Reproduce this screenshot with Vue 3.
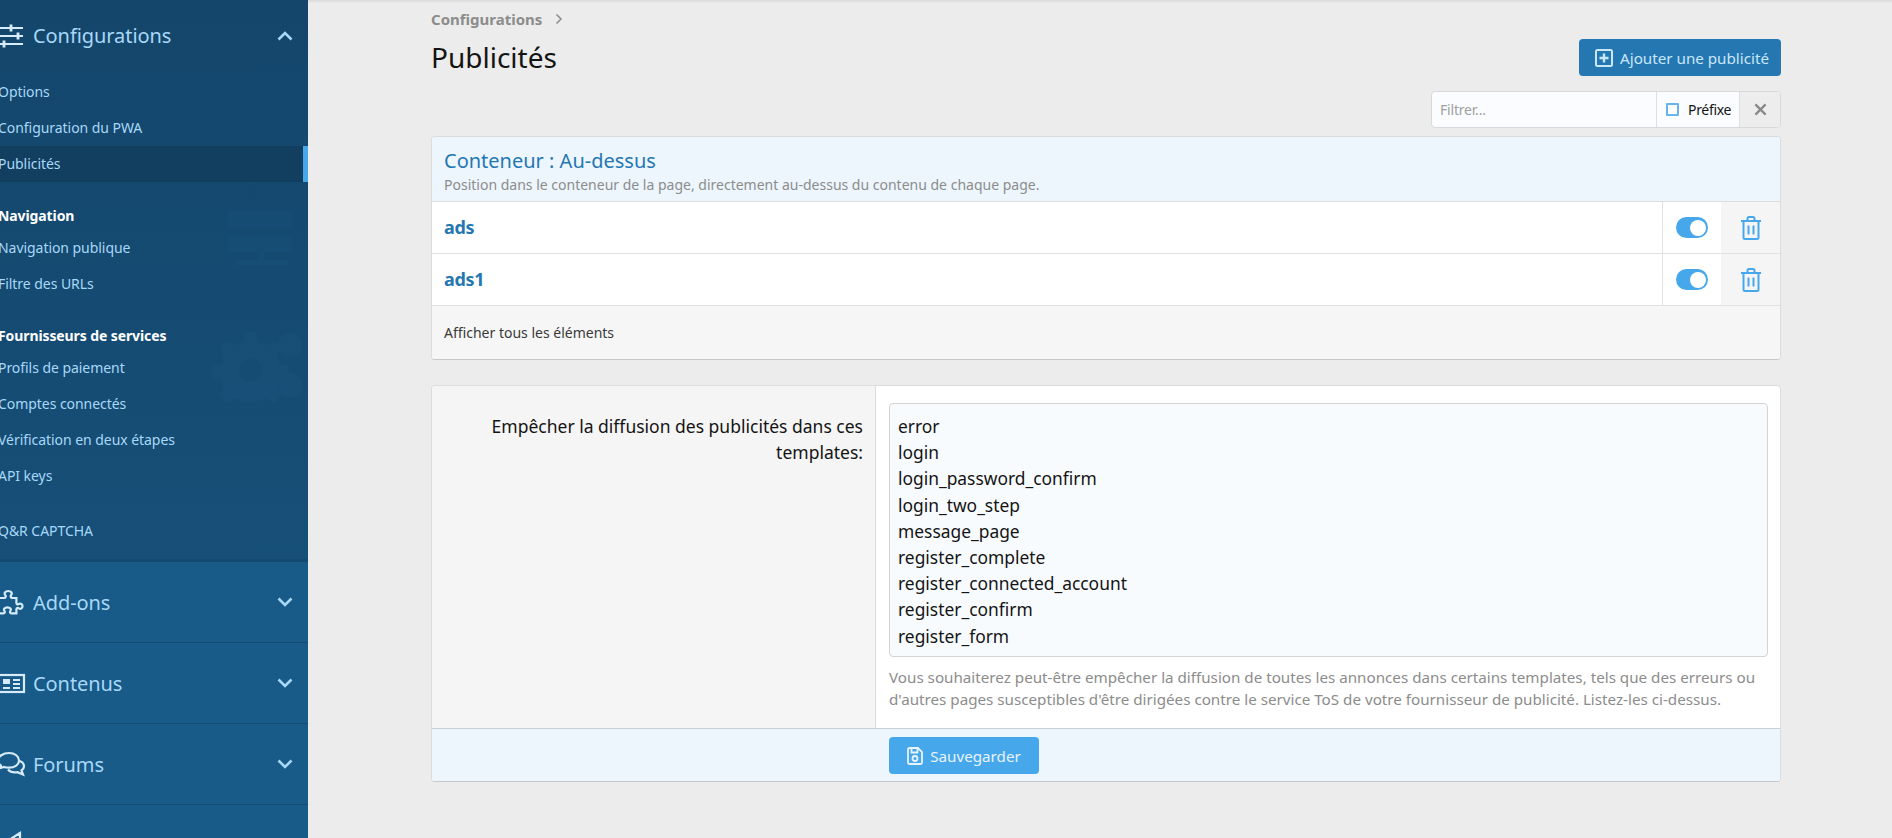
<script setup>
const groups = [
  { heading: '', items: ['Options', 'Configuration du PWA', 'Publicités'] },
  { heading: 'Navigation', items: ['Navigation publique', 'Filtre des URLs'] },
  { heading: 'Fournisseurs de services', items: ['Profils de paiement', 'Comptes connectés', 'Vérification en deux étapes', 'API keys'] },
  { heading: '', items: ['Q&R CAPTCHA'] }
]
const closedGroups = [
  { label: 'Add-ons', icon: 'puzzle' },
  { label: 'Contenus', icon: 'news' },
  { label: 'Forums', icon: 'chat' }
]
const rows = ['ads', 'ads1']
const templates = [
  'error', 'login', 'login_password_confirm', 'login_two_step', 'message_page',
  'register_complete', 'register_connected_account', 'register_confirm', 'register_form'
].join('\n')
</script>

<template>
  <div class="page">
    <aside class="sidebar">
      <div class="open-group">
        <div class="nav-head top">
          <svg class="nav-icon" viewBox="0 0 26 24" fill="none" stroke="currentColor" stroke-width="2.200">
            <path d="M-1 4h25M-1 12h25M-1 20h25" />
            <path d="M12 .5v7M19 8.500v7M5 16.500v7" stroke-width="2.800" />
          </svg>
          <span class="nav-label">Configurations</span>
          <svg class="chev" viewBox="0 0 16 10" fill="none" stroke="currentColor" stroke-width="2.600"><path d="M1.500 8.500L8 2l6.500 6.500" /></svg>
        </div>
        <section v-for="(g, i) in groups" :key="i" class="nav-section">
          <div v-if="g.heading" class="nav-heading">{{ g.heading }}</div>
          <div v-for="item in g.items" :key="item" class="nav-item" :class="{ active: item === 'Publicités' }">{{ item }}</div>
        </section>
        <svg class="wm wm-a" viewBox="0 0 80 64" fill="currentColor">
          <rect x="4" y="2" width="68" height="18" rx="3" />
          <rect x="4" y="28" width="68" height="18" rx="3" />
          <rect x="36" y="46" width="6" height="10" />
          <rect x="12" y="54" width="56" height="6" />
        </svg>
        <svg class="wm wm-b" viewBox="0 0 100 76" fill="currentColor">
          <path fill-rule="evenodd" d="M36 2h12l2 10 8 4 9-5 8 8-5 9 3 8 10 2v12l-10 2-3 8 5 9-8 8-9-5-8 3-2 10H36l-2-10-8-3-9 5-8-8 5-9-3-8-10-2V38l10-2 3-8-5-9 8-8 9 5 8-4zM42 30a12 12 0 1 0 .01 0z" />
          <circle cx="84" cy="16" r="13" />
          <circle cx="84" cy="58" r="13" />
        </svg>
      </div>
      <div v-for="c in closedGroups" :key="c.label" class="nav-head closed">
        <svg class="nav-icon" viewBox="0 0 26 26" fill="none" stroke="currentColor" stroke-width="2.200">
          <path v-if="c.icon === 'puzzle'" d="M-2 9h7c2 0 2-2 1.200-3-1.500-2 .3-4 3-4s4.500 2 3 4c-.8 1-.8 3 1.200 3h4v5c0 1.500 1.500 1.800 2.500 1 1.800-1.200 3.600.3 3.600 2.200s-1.800 3.400-3.600 2.200c-1-.8-2.500-.5-2.500 1v4h-5c-1.500 0-1.800-1.500-1-2.500 1.200-1.800-.3-3.600-3-3.600s-4.200 1.800-3 3.600c.8 1 .5 2.500-1 2.500h-5" />
          <template v-else-if="c.icon === 'news'">
            <rect x="-1" y="5" width="26" height="17" />
            <rect x="4" y="9" width="7" height="5" fill="currentColor" stroke="none" />
            <path d="M4 18h7M14 10h7M14 14h7M14 18h7" />
          </template>
          <template v-else>
            <path d="M10 2C4 2-1 5.500-1 9.500c0 2 1 3.700 2.800 5l-1.800 3 5-1.500c1.500.5 3 .7 5 .7 6 0 10-3.200 10-7.200S16 2 10 2z" />
            <path d="M21 10c2.500 1.200 4 3 4 5.200 0 1.700-1 3.200-2.500 4.300l1.500 4-5.500-2.300c-3 .5-7.200 0-9.500-2.700" />
          </template>
        </svg>
        <span class="nav-label">{{ c.label }}</span>
        <svg class="chev" viewBox="0 0 16 10" fill="none" stroke="currentColor" stroke-width="2.600"><path d="M1.500 1.500L8 8l6.500-6.500" /></svg>
      </div>
      <div class="nav-head closed tail">
        <svg class="nav-icon" viewBox="0 0 26 26" fill="none" stroke="currentColor" stroke-width="2.200">
          <path d="M21 1L10 8H0v9h10l11 7z" />
        </svg>
      </div>
    </aside>

    <main class="main">
      <div class="crumb">
        <span>Configurations</span>
        <svg viewBox="0 0 8 12" fill="none" stroke="currentColor" stroke-width="1.500"><path d="M1.500 1.500L6 6l-4.500 4.500" /></svg>
      </div>
      <div class="title-row">
        <h1>Publicités</h1>
        <button class="btn btn-add">
          <svg viewBox="0 0 18 18" fill="none" stroke="currentColor" stroke-width="2"><rect x="1" y="1" width="16" height="16" rx="1.500" /><path d="M9 4.500v9M4.500 9h9" stroke-width="2.400" /></svg>
          Ajouter une publicité
        </button>
      </div>
      <div class="filter-row">
        <div class="filter">
          <span class="f-input">Filtrer...</span>
          <span class="f-check"><i class="box"></i>Préfixe</span>
          <span class="f-clear">
            <svg viewBox="0 0 14 14" fill="none" stroke="currentColor" stroke-width="2.400"><path d="M1.500 1.500l11 11M12.500 1.500l-11 11" /></svg>
          </span>
        </div>
      </div>

      <section class="panel">
        <header class="panel-head">
          <div class="panel-title">Conteneur : Au-dessus</div>
          <div class="panel-sub">Position dans le conteneur de la page, directement au-dessus du contenu de chaque page.</div>
        </header>
        <div v-for="r in rows" :key="r" class="row">
          <div class="row-name">{{ r }}</div>
          <div class="row-toggle"><span class="toggle"><i></i></span></div>
          <div class="row-del">
            <svg viewBox="0 0 20 24" fill="none" stroke="currentColor" stroke-width="2">
              <path d="M0 5h20M6.500 5V2.500A1.500 1.500 0 0 1 8 1h4a1.500 1.500 0 0 1 1.500 1.500V5M2.500 5v16.500A1.500 1.500 0 0 0 4 23h12a1.500 1.500 0 0 0 1.500-1.500V5M7.500 9.500v9M12.500 9.500v9" />
            </svg>
          </div>
        </div>
        <footer class="panel-foot">Afficher tous les éléments</footer>
      </section>

      <section class="panel form">
        <div class="form-row">
          <label class="form-label">Empêcher la diffusion des publicités dans ces templates:</label>
          <div class="form-field">
            <textarea class="ta" readonly :value="templates"></textarea>
            <p class="help">Vous souhaiterez peut-être empêcher la diffusion de toutes les annonces dans certains templates, tels que des erreurs ou d'autres pages susceptibles d'être dirigées contre le service ToS de votre fournisseur de publicité. Listez-les ci-dessus.</p>
          </div>
        </div>
        <footer class="form-foot">
          <button class="btn btn-save">
            <svg viewBox="0 0 16 18" fill="none" stroke="currentColor" stroke-width="1.800"><path d="M1 2.500A1.500 1.500 0 0 1 2.500 1h8.500L15 5v10.500a1.500 1.500 0 0 1-1.500 1.500h-11A1.500 1.500 0 0 1 1 15.500z" /><path d="M4.500 1v4.500h6V1" /><circle cx="8" cy="11.500" r="2.500" /></svg>
            Sauvegarder
          </button>
        </footer>
      </section>
    </main>
  </div>
</template>

<style>
html, body { margin: 0; background: #ececec; }
</style>

<style scoped>
.page {
  display: flex;
  height: 838px;
  overflow: hidden;
  font-family: "Noto Sans", "Open Sans", sans-serif;
  color: #141414;
  background: #ececec;
}
.sidebar {
  width: 308px;
  flex: none;
  height: 838px;
  overflow: hidden;
  background: #185a88;
  color: #a8d8f8;
}
.open-group {
  position: relative;
  height: 562px;
  box-sizing: border-box;
  background: linear-gradient(#14466b, #164f78);
  border-bottom: 3px solid #144a70;
}
.nav-head {
  display: flex;
  align-items: center;
  height: 80px;
  border-bottom: 1px solid #154c74;
  padding-right: 15px;
}
.nav-head.top { height: 71px; border-bottom: 0; margin-bottom: 3px; }
.nav-icon { width: 26px; height: 26px; flex: none; margin-left: -1px; overflow: visible; color: #d6ecfb; }
.nav-label { margin-left: 8px; font-size: 20px; flex: 1; letter-spacing: -.07px; }
.chev { width: 16px; height: 10px; flex: none; }
.nav-section + .nav-section { margin-top: 20px; }
.nav-section:last-of-type { margin-top: 19px; }
.nav-heading {
  height: 28px;
  line-height: 28px;
  font-size: 14px;
  font-weight: 700;
  color: #fff;
  margin-left: -2px;
  letter-spacing: -.1px;
}
.nav-item {
  height: 36px;
  line-height: 36px;
  font-size: 14px;
  text-indent: -2px;
  letter-spacing: -.05px;
}
.nav-item.active {
  background: #123f60;
  box-shadow: inset -5px 0 0 #47a7eb;
}
.wm { position: absolute; color: #1a5680; opacity: .3; }
.wm-a { left: 224px; top: 208px; width: 76px; height: 62px; }
.wm-b { left: 210px; top: 330px; width: 96px; height: 72px; }

.main {
  width: 1350px;
  margin-left: 123px;
  flex: none;
  box-sizing: border-box;
  padding-top: 10px;
}
.page::before {
  content: "";
  position: absolute;
  left: 308px;
  right: 0;
  top: 0;
  height: 3px;
  background: linear-gradient(#d9d9d9, #ececec);
}
.crumb {
  display: flex;
  align-items: center;
  gap: 13px;
  height: 18px;
  font-size: 15px;
  font-weight: 700;
  color: #8c8c8c;
}
.crumb svg { width: 8px; height: 12px; }
.title-row {
  display: flex;
  justify-content: space-between;
  align-items: flex-start;
  margin-top: 11px;
  height: 52px;
}
h1 { margin: -1px 0 0; font-size: 28px; line-height: 38px; font-weight: 400; }
.btn {
  display: inline-flex;
  align-items: center;
  justify-content: center;
  height: 37px;
  border: 0;
  border-radius: 4px;
  font: inherit;
  font-size: 15.200px;
  color: #c9e7fb;
}
.btn-add { width: 202px; background: #2577b1; gap: 7px; padding-right: 2px; box-sizing: border-box; }
.btn-add svg { width: 18px; height: 18px; flex: none; }
.filter-row { display: flex; justify-content: flex-end; }
.filter {
  display: flex;
  width: 350px;
  height: 37px;
  box-sizing: border-box;
  border: 1px solid #d9d9d9;
  border-radius: 4px;
  background: #fafcff;
  overflow: hidden;
  font-size: 14px;
}
.f-input { width: 224px; line-height: 35px; padding-left: 8px; box-sizing: border-box; color: #a0a0a0; letter-spacing: -.2px; }
.f-check {
  width: 83px;
  display: flex;
  align-items: center;
  box-sizing: border-box;
  padding-left: 9px;
  gap: 9px;
  border-left: 1px solid #dfdfdf;
  letter-spacing: -.3px;
}
.box { width: 13px; height: 13px; box-sizing: border-box; border: 2px solid #6ab4ec; border-radius: 1px; background: #fff; }
.f-clear {
  flex: 1;
  display: flex;
  align-items: center;
  justify-content: center;
  background: #ededed;
  border-left: 1px solid #dfdfdf;
  color: #888;
}
.f-clear svg { width: 13px; height: 13px; }
.panel {
  margin-top: 8px;
  box-sizing: border-box;
  border: 1px solid #dcdcdc;
  border-bottom-color: #c8c8c8;
  border-radius: 4px;
  overflow: hidden;
  background: #fff;
}
.panel-head {
  height: 64px;
  border-bottom: 1px solid #dcdcdc;
  background: #edf6fd;
  padding-left: 12px;
}
.panel-title { padding-top: 10px; font-size: 20px; line-height: 27px; color: #2577b1; }
.panel-sub { margin-top: 2px; font-size: 14px; line-height: 18px; color: #8c8c8c; }
.row {
  display: flex;
  height: 51px;
  border-bottom: 1px solid #e2e2e2;
}
.row-name { flex: 1; padding-left: 12px; line-height: 51px; font-size: 18px; font-weight: 700; color: #2577b1; letter-spacing: -.3px; }
.row-toggle { width: 59px; display: flex; align-items: center; justify-content: center; border-left: 1px solid #e2e2e2; box-sizing: border-box; }
.toggle { display: block; position: relative; width: 32px; height: 21px; border-radius: 11px; background: #47a7eb; }
.toggle i { position: absolute; right: 2px; top: 2.500px; width: 16px; height: 16px; border-radius: 50%; background: #fff; }
.row-del { width: 59px; display: flex; align-items: center; justify-content: center; background: #f5f5f5; color: #47a7eb; }
.row-del svg { width: 20px; height: 24px; }
.panel-foot {
  height: 53px;
  line-height: 53px;
  padding-left: 12px;
  background: #f6f6f6;
  font-size: 14px;
  color: #3a3a3a;
}
.form { margin-top: 25px; }
.form-row { display: flex; height: 342px; border-bottom: 1px solid #c8d0d6; }
.form-label {
  width: 444px;
  box-sizing: border-box;
  flex: none;
  padding: 27px 12px 0 20px;
  text-align: right;
  background: #f5f5f5;
  border-right: 1px solid #dcdcdc;
  font-size: 17.500px;
  line-height: 26px;
}
.form-field { flex: 1; padding: 17px 12px 0 13px; }
.ta {
  display: block;
  width: 100%;
  height: 254px;
  box-sizing: border-box;
  border: 1px solid #d4d4d4;
  border-radius: 4px;
  background: #f8fbfe;
  padding: 9px 8px;
  resize: none;
  overflow: hidden;
  font: inherit;
  font-size: 17.400px;
  line-height: 26.200px;
  color: #141414;
  outline: 0;
}
.help {
  margin: 9px 0 0;
  font-size: 15.200px;
  line-height: 22px;
  color: #8c8c8c;
}
.form-foot {
  height: 52px;
  background: #edf6fd;
  padding: 8px 0 0 457px;
  box-sizing: border-box;
}
.btn-save { width: 150px; background: #47a7eb; gap: 7px; color: #e6f4fd; }
.btn-save svg { width: 16px; height: 18px; flex: none; }
</style>
